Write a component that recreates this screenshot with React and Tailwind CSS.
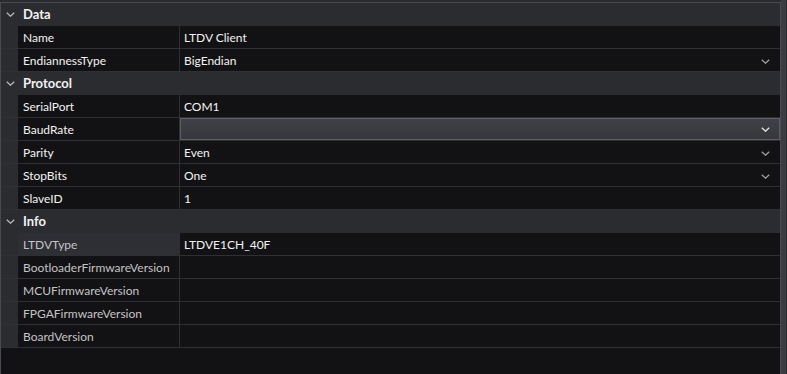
import React from 'react';

const font = { fontFamily: 'Lato, "Noto Sans", sans-serif' };

const Chevron = ({ className }) => (
    <svg width="9" height="5" viewBox="0 0 9 5" className={className}>
        <path d="M0.8 0.8 L4.5 4.2 L8.2 0.8" fill="none" stroke="currentColor" strokeWidth="1.3" />
    </svg>
);

const sections = [
    {
        title: 'Data',
        rows: [
            { label: 'Name', value: 'LTDV Client' },
            { label: 'EndiannessType', value: 'BigEndian', combo: true },
        ],
    },
    {
        title: 'Protocol',
        rows: [
            { label: 'SerialPort', value: 'COM1' },
            { label: 'BaudRate', value: '', combo: true, active: true },
            { label: 'Parity', value: 'Even', combo: true },
            { label: 'StopBits', value: 'One', combo: true },
            { label: 'SlaveID', value: '1' },
        ],
    },
    {
        title: 'Info',
        readOnly: true,
        rows: [
            { label: 'LTDVType', value: 'LTDVE1CH_40F', selected: true },
            { label: 'BootloaderFirmwareVersion', value: '' },
            { label: 'MCUFirmwareVersion', value: '' },
            { label: 'FPGAFirmwareVersion', value: '' },
            { label: 'BoardVersion', value: '' },
        ],
    },
];

const Row = ({ row, readOnly }) => (
    <div className="flex h-[23px] border-b border-[#2f3034]">
        <div className="w-[17px] bg-[#2b2c30]" />
        <div
            className={`w-[162px] flex items-center pl-[5px] pt-[2px] border-r border-[#2f3034] ${
                row.selected ? 'bg-[#2e2f34]' : 'bg-[#121214]'
            } ${readOnly ? 'text-[#c4c4c6]' : 'text-[#f2f2f2]'}`}
        >
            {row.label}
        </div>
        {row.active ? (
            <div className="flex-1 flex items-center justify-between pl-[4px] pr-[9px] bg-gradient-to-b from-[#404146] to-[#36373c] border border-[#5e5f64]">
                <span className="text-[#f2f2f2]">{row.value}</span>
                <Chevron className="text-[#e8e8e8]" />
            </div>
        ) : (
            <div className="flex-1 flex items-center justify-between pl-[4px] pt-[2px] pr-[10px] bg-[#121214] text-[#f2f2f2]">
                <span>{row.value}</span>
                {row.combo && <Chevron className="text-[#a0a0a4]" />}
            </div>
        )}
    </div>
);

const App = () => {
    return (
        <div className="w-[787px] h-[374px] bg-[#2a2b2f] flex text-[12px] overflow-hidden" style={font}>
            <div className="flex-1 pt-[2px]">
                <div className="h-full border-t border-l border-r border-[#4a4b50] bg-[#121214] flex flex-col">
                    {sections.map((section) => (
                        <div key={section.title}>
                            <div className="h-[23px] flex items-center bg-[#2b2c30] border-b border-[#2b2c30]">
                                <div className="w-[17px] flex justify-center pl-[2px]">
                                    <Chevron className="text-[#b8b8bc]" />
                                </div>
                                <span className="pl-[5px] pt-[2px] font-bold text-[13px] text-[#f2f2f2]">{section.title}</span>
                            </div>
                            {section.rows.map((row) => (
                                <Row key={row.label} row={row} readOnly={section.readOnly} />
                            ))}
                        </div>
                    ))}
                </div>
            </div>
            <div className="w-[5px] bg-[#3c3d42] mr-[1px]" />
        </div>
    );
};

export default App;
